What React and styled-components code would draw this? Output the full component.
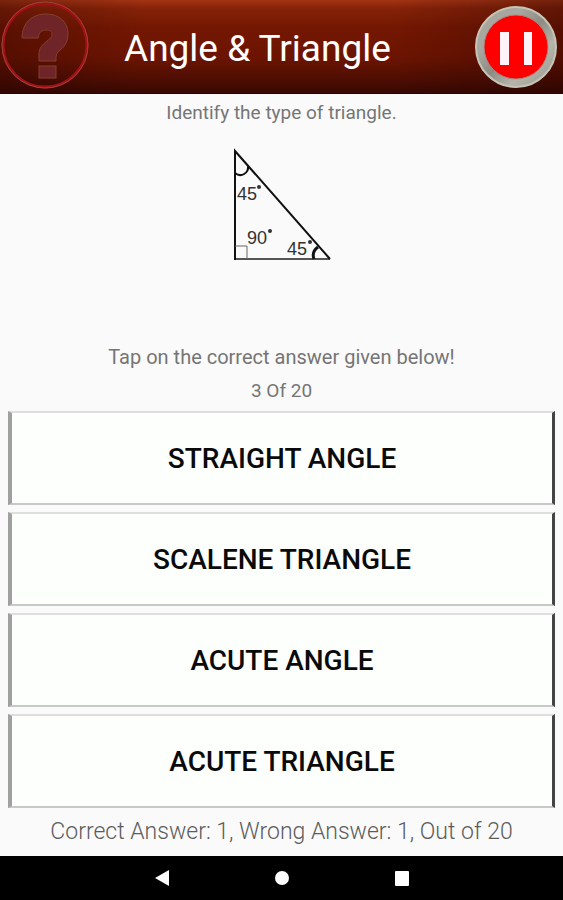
import React, { useState } from "react";
import styled, { createGlobalStyle } from "styled-components";

const GlobalStyle = createGlobalStyle`
  * {
    box-sizing: border-box;
  }
  body {
    margin: 0;
    background: #fafafa;
    font-family: Roboto, "Liberation Sans", sans-serif;
  }
`;

const Screen = styled.div`
  display: flex;
  flex-direction: column;
  min-height: 100vh;
`;

const Header = styled.header`
  display: flex;
  align-items: center;
  height: 94px;
  padding: 0 5px 0 1px;
  border-bottom: 1px solid #1c0a08;
  background:
    linear-gradient(90deg, rgba(30, 0, 0, 0.3) 0%, rgba(30, 0, 0, 0) 25%, rgba(30, 0, 0, 0) 70%, rgba(30, 0, 0, 0.35) 100%),
    linear-gradient(180deg, #a33414 0%, #852208 9%, #731702 30%, #6c1401 62%, #500e02 84%, #380802 100%);
`;

const Title = styled.h1`
  flex: 1;
  margin: 4px 0 0 35px;
  color: #fff;
  font-size: 37px;
  font-weight: 400;
  line-height: 44px;
`;

const IconButton = styled.button`
  display: flex;
  padding: 0;
  border: 0;
  background: none;
  cursor: pointer;
`;

const HelpButton = styled(IconButton)`
  margin-bottom: 4px;
`;

const Main = styled.main`
  display: flex;
  flex-direction: column;
  flex: 1;
  padding: 7px 8px 0;
`;

const Line = styled.p`
  margin: 0;
  color: #757575;
  font-size: ${(props) => props.$size || 19}px;
  line-height: 24px;
  text-align: center;
`;

const Figure = styled.figure`
  display: flex;
  justify-content: center;
  height: 220px;
  margin: 0;
  padding-top: 22px;
`;

const Counter = styled(Line)`
  margin-top: 10px;
`;

const Answers = styled.div`
  display: flex;
  flex-direction: column;
  gap: 7px;
  margin-top: 8px;
`;

const Answer = styled.button`
  height: 94px;
  border: solid;
  border-width: 2px 3px 2px 4px;
  border-color: #dedede #444 #c8c8c8 #a0a0a0;
  background: #fdfffc;
  color: #0a0a0a;
  font-family: inherit;
  font-size: 28px;
  font-weight: 500;
  text-transform: uppercase;
  cursor: pointer;
`;

const Score = styled(Line)`
  margin: 12px 0;
  color: #5c5c5c;
  font-weight: 300;
`;

const NavBar = styled.nav`
  display: flex;
  justify-content: center;
  height: 44px;
  background: #000;
`;

const NavButton = styled(IconButton)`
  align-items: center;
  justify-content: center;
  width: 120px;
`;

const HelpIcon = () => (
  <svg width="88" height="88" viewBox="0 0 88 88" fill="none">
    <circle cx="44" cy="44" r="42" stroke="#a80e16" strokeWidth="3" />
    <circle cx="44" cy="44" r="43" stroke="#8f4a3c" strokeWidth="1" />
    <path
      d="M21 37C21 22 31 13 45 13C59 13 67 22 67 32C67 42 63 46 58 50C55 53 55 54 55 60H38V53C38 47 41 44 46 40C50 37 51 35 51 33C51 30 49 29 45 29C41 29 38 31 37 37Z"
      fill="#6f2428"
      stroke="#84402f"
    />
    <rect x="38" y="65" width="17" height="12" fill="#6f2428" stroke="#84402f" />
  </svg>
);

const PauseIcon = () => (
  <svg width="84" height="84" viewBox="0 0 84 84">
    <defs>
      <linearGradient id="ring" x1="0" y1="0" x2="1" y2="1">
        <stop offset="0" stopColor="#a5a59c" />
        <stop offset="0.3" stopColor="#a8a8a0" />
        <stop offset="0.5" stopColor="#8c8c84" />
        <stop offset="0.7" stopColor="#b5b5aa" />
        <stop offset="1" stopColor="#94948c" />
      </linearGradient>
    </defs>
    <circle cx="42" cy="42" r="40" fill="url(#ring)" stroke="#c6c4b6" strokeWidth="2" />
    <circle cx="42" cy="42" r="32" fill="#fe0000" stroke="#a8877f" strokeWidth="1" />
    <rect x="26" y="27" width="9" height="33" fill="#fff3fa" />
    <rect x="50" y="27" width="8" height="33" fill="#fff3fa" />
  </svg>
);

const Triangle = () => (
  <svg
    width="100"
    height="116"
    viewBox="0 0 100 116"
    fill="none"
    stroke="#111"
    role="img"
    aria-label="Triangle with angles 45, 90 and 45 degrees"
  >
    <path d="M3 112H98" stroke="#555" strokeWidth="2" />
    <path d="M3 113V4L98 112" strokeWidth="2" />
    <path d="M3 99H15V112" stroke="#666" strokeWidth="1" />
    <path d="M3 26C9 31 17 26 16 19" strokeWidth="2" />
    <path d="M86 100C82 103 80 107 82 112" strokeWidth="3" />
    <g fill="#333" stroke="none" fontFamily='"Liberation Sans", Arial, sans-serif' fontSize="18">
      <text x="5" y="53">45</text>
      <text x="15" y="97">90</text>
      <text x="55" y="108">45</text>
      <circle cx="27" cy="40" r="2" />
      <circle cx="38" cy="84" r="2" />
      <circle cx="78" cy="95" r="2" />
    </g>
  </svg>
);

const answers = ["Straight Angle", "Scalene Triangle", "Acute Angle", "Acute Triangle"];

export default function App() {
  const [paused, setPaused] = useState(false);

  return (
    <Screen>
      <GlobalStyle />
      <Header>
        <HelpButton aria-label="Help">
          <HelpIcon />
        </HelpButton>
        <Title>Angle &amp; Triangle</Title>
        <IconButton aria-label="Pause" aria-pressed={paused} onClick={() => setPaused(!paused)}>
          <PauseIcon />
        </IconButton>
      </Header>
      <Main>
        <Line>Identify the type of triangle.</Line>
        <Figure>
          <Triangle />
        </Figure>
        <Line $size={20}>Tap on the correct answer given below!</Line>
        <Counter>3 Of 20</Counter>
        <Answers>
          {answers.map((answer) => (
            <Answer key={answer} disabled={paused}>
              {answer}
            </Answer>
          ))}
        </Answers>
        <Score $size={23}>Correct Answer: 1, Wrong Answer: 1, Out of 20</Score>
      </Main>
      <NavBar>
        <NavButton aria-label="Back">
          <svg width="16" height="16" viewBox="0 0 16 16" fill="#fff">
            <path d="M1 8L15 0V16Z" />
          </svg>
        </NavButton>
        <NavButton aria-label="Home">
          <svg width="16" height="16" viewBox="0 0 16 16" fill="#fff">
            <circle cx="8" cy="8" r="7" />
          </svg>
        </NavButton>
        <NavButton aria-label="Recent apps">
          <svg width="16" height="16" viewBox="0 0 16 16" fill="#fff">
            <rect x="1" y="1" width="14" height="15" rx="1" />
          </svg>
        </NavButton>
      </NavBar>
    </Screen>
  );
}
